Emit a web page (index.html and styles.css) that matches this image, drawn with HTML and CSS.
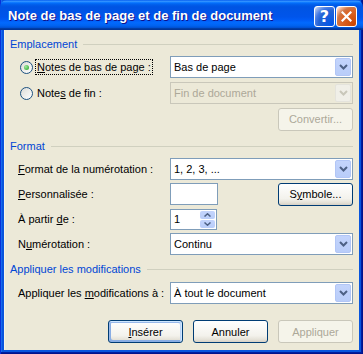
FILE: index.html
```html
<!DOCTYPE html>
<html lang="fr">
<head>
    <meta charset="UTF-8">
    <title>Note de bas de page et de fin de document</title>
    <link rel="stylesheet" href="styles.css">
</head>
<body>
    <div class="window">
        <div class="titlebar">
            <span class="title">Note de bas de page et de fin de document</span>
            <div class="caption-buttons">
                <span class="cap-btn help">?</span>
                <span class="cap-btn close">
                    <svg width="11" height="11" viewBox="0 0 11 11"><path d="M1.5 1.5 L9.5 9.5 M9.5 1.5 L1.5 9.5" stroke="#fff" stroke-width="2.2" stroke-linecap="square"/></svg>
                </span>
            </div>
        </div>
        <div class="client">
            <div class="group-title">Emplacement</div>
            <div class="rows rows-location">
                <div class="row">
                    <span class="radio-label">
                        <span class="radio checked"><span class="dot"></span></span>
                        <span class="focus"><u>N</u>otes de bas de page :</span>
                    </span>
                    <div class="combo"><span class="combo-text">Bas de page</span><span class="combo-arrow"><svg width="9" height="6" viewBox="0 0 9 6"><path d="M1 1 L4.5 4.5 L8 1" fill="none" stroke="#4D6185" stroke-width="2"/></svg></span></div>
                </div>
                <div class="row">
                    <span class="radio-label">
                        <span class="radio"></span>
                        <span class="plain">Note<u>s</u> de fin :</span>
                    </span>
                    <div class="combo disabled"><span class="combo-text">Fin de document</span><span class="combo-arrow"><svg width="9" height="6" viewBox="0 0 9 6"><path d="M1 1 L4.5 4.5 L8 1" fill="none" stroke="#C9C7BA" stroke-width="2"/></svg></span></div>
                </div>
                <div class="row row-end">
                    <span class="btn disabled">Convertir...</span>
                </div>
            </div>

            <div class="group-title">Format</div>
            <div class="rows rows-format">
                <div class="row">
                    <span class="label"><u>F</u>ormat de la numérotation :</span>
                    <div class="combo"><span class="combo-text">1, 2, 3, ...</span><span class="combo-arrow"><svg width="9" height="6" viewBox="0 0 9 6"><path d="M1 1 L4.5 4.5 L8 1" fill="none" stroke="#4D6185" stroke-width="2"/></svg></span></div>
                </div>
                <div class="row">
                    <span class="label"><u>P</u>ersonnalisée :</span>
                    <div class="textbox"></div>
                    <span class="btn symbol">S<u>y</u>mbole...</span>
                </div>
                <div class="row">
                    <span class="label">À partir <u>d</u>e :</span>
                    <div class="spin">
                        <span class="spin-text">1</span>
                        <span class="spin-buttons">
                            <span class="spin-btn"><svg width="7" height="4" viewBox="0 0 7 4"><path d="M0.5 3.5 L3.5 0.8 L6.5 3.5" fill="none" stroke="#4D6185" stroke-width="1.5"/></svg></span>
                            <span class="spin-btn"><svg width="7" height="4" viewBox="0 0 7 4"><path d="M0.5 0.5 L3.5 3.2 L6.5 0.5" fill="none" stroke="#4D6185" stroke-width="1.5"/></svg></span>
                        </span>
                    </div>
                </div>
                <div class="row">
                    <span class="label">N<u>u</u>mérotation :</span>
                    <div class="combo"><span class="combo-text">Continu</span><span class="combo-arrow"><svg width="9" height="6" viewBox="0 0 9 6"><path d="M1 1 L4.5 4.5 L8 1" fill="none" stroke="#4D6185" stroke-width="2"/></svg></span></div>
                </div>
            </div>

            <div class="group-title">Appliquer les modifications</div>
            <div class="rows rows-apply">
                <div class="row">
                    <span class="label">Appliquer les <u>m</u>odifications à :</span>
                    <div class="combo"><span class="combo-text">À tout le document</span><span class="combo-arrow"><svg width="9" height="6" viewBox="0 0 9 6"><path d="M1 1 L4.5 4.5 L8 1" fill="none" stroke="#4D6185" stroke-width="2"/></svg></span></div>
                </div>
            </div>

            <div class="footer">
                <span class="btn default"><u>I</u>nsérer</span>
                <span class="btn">Annuler</span>
                <span class="btn disabled">Appliquer</span>
            </div>
        </div>
    </div>
</body>
</html>
```

FILE: styles.css
```css
body {
    margin: 0;
    overflow: hidden;
    font-family: "Liberation Sans", Arial, sans-serif;
    font-size: 11px;
    color: #000;
}
.window {
    width: 363px;
    height: 354px;
    box-sizing: border-box;
    display: flex;
    flex-direction: column;
    background-color: #0855dd;
    padding: 0 4px 4px;
    box-shadow: inset 1px 0 #0831d9, inset -1px -1px #00138c, inset -2px -2px #001ea0, inset 2px 0 #166aee;
}
.titlebar {
    height: 30px;
    margin: 0 -4px;
    display: flex;
    align-items: center;
    justify-content: space-between;
    padding: 0 6px 0 8px;
    border-radius: 7px 7px 0 0;
    background: linear-gradient(to bottom, #0058ee 0%, #3593ff 4%, #288eff 6%, #127dff 8%, #036ffc 10%, #0262ee 14%, #0057e5 20%, #0054e3 24%, #0055eb 56%, #005bf5 66%, #026afe 76%, #0062ef 86%, #0052d6 92%, #0040ab 94%, #003092 100%);
}
.title {
    color: #fff;
    font-weight: bold;
    font-size: 13px;
    text-shadow: 1px 1px #0f1089;
}
.caption-buttons {
    display: flex;
    gap: 1px;
    margin-top: 3px;
}
.cap-btn {
    width: 21px;
    height: 21px;
    box-sizing: border-box;
    border: 1px solid #fff;
    border-radius: 3px;
    display: flex;
    align-items: center;
    justify-content: center;
    color: #fff;
}
.help {
    background: radial-gradient(circle at 90% 90%, #0054e9 0%, #2263d5 55%, #4479e4 70%, #a3bbec 90%, #fff 100%);
    font-family: "DejaVu Sans", sans-serif;
    font-weight: bold;
    font-size: 16px;
}
.close {
    background: radial-gradient(circle at 90% 90%, #cc4600 0%, #dc6527 55%, #cd7546 70%, #ffccb2 90%, #fff 100%);
}
.client {
    flex: 1;
    background-color: #ece9d8;
    padding: 7px 6px 0;
    box-shadow: inset 1px 0 #f5f3ea;
}
.group-title {
    height: 14px;
    display: flex;
    align-items: center;
    color: #0046d5;
}
.group-title::after {
    content: "";
    flex: 1;
    height: 0;
    border-top: 1px solid #d0d0bf;
    margin-left: 6px;
}
.rows {
    display: flex;
    flex-direction: column;
}
.rows-location {
    gap: 4px;
    margin-top: 5px;
    margin-bottom: 9px;
}
.rows-format {
    gap: 3px;
    margin-top: 5px;
    margin-bottom: 7px;
}
.rows-apply {
    margin-top: 6px;
}
.row {
    height: 22px;
    display: flex;
    align-items: center;
}
.row-end {
    justify-content: flex-end;
}
.label {
    width: 160px;
    box-sizing: border-box;
    padding-left: 8px;
}
.radio-label {
    width: 160px;
    box-sizing: border-box;
    padding-left: 10px;
    display: flex;
    align-items: center;
}
.radio {
    width: 13px;
    height: 13px;
    box-sizing: border-box;
    border: 1px solid #1c5180;
    border-radius: 50%;
    background: linear-gradient(135deg, #dcdcd7, #fff);
    display: flex;
    align-items: center;
    justify-content: center;
    margin-right: 3px;
}
.dot {
    width: 5px;
    height: 5px;
    border-radius: 50%;
    background: radial-gradient(circle at 35% 35%, #a0e8a0, #21a121);
}
.focus {
    outline: 1px dotted #000;
    padding: 1px;
}
.plain {
    padding: 1px;
}
.combo {
    width: 183px;
    height: 22px;
    box-sizing: border-box;
    border: 1px solid #7f9db9;
    background-color: #fff;
    display: flex;
    align-items: center;
    padding: 1px;
}
.combo-text {
    flex: 1;
    padding-left: 2px;
}
.combo-arrow {
    width: 16px;
    height: 18px;
    box-sizing: border-box;
    border: 1px solid #b2c6f6;
    border-radius: 2px;
    background: linear-gradient(to bottom, #c3d4fc, #b9cdf9);
    display: flex;
    align-items: center;
    justify-content: center;
}
.combo.disabled {
    border-color: #c9c7ba;
    background-color: #ece9d8;
    color: #aca899;
}
.combo.disabled .combo-arrow {
    background: #f0efe8;
    border-color: #e4e3dc;
}
.textbox {
    width: 48px;
    height: 22px;
    box-sizing: border-box;
    border: 1px solid #7f9db9;
    background-color: #fff;
}
.spin {
    width: 47px;
    height: 21px;
    box-sizing: border-box;
    border: 1px solid #7f9db9;
    background-color: #fff;
    display: flex;
    align-items: center;
    padding: 1px;
}
.spin-text {
    flex: 1;
    padding-left: 2px;
}
.spin-buttons {
    width: 15px;
    height: 17px;
    display: flex;
    flex-direction: column;
    gap: 1px;
}
.spin-btn {
    flex: 1;
    border-radius: 2px;
    background: linear-gradient(to bottom, #c3d4fc, #b9cdf9);
    display: flex;
    align-items: center;
    justify-content: center;
}
.btn {
    width: 75px;
    height: 23px;
    box-sizing: border-box;
    border: 1px solid #003c74;
    border-radius: 3px;
    background: linear-gradient(to bottom, #fff, #f3f2ec 70%, #e5e2d8 88%, #d6d0c5);
    display: flex;
    align-items: center;
    justify-content: center;
}
.btn.symbol {
    margin-left: auto;
}
.btn.default {
    box-shadow: inset -1px 1px #cee7ff, inset 1px 2px #98b8ea, inset -2px 2px #bcd4f6, inset 1px -1px #89ade4, inset 2px -2px #89ade4;
}
.btn.disabled {
    border-color: #c9c7ba;
    background: #f5f4ea;
    color: #aca899;
}
.footer {
    display: flex;
    justify-content: flex-end;
    gap: 10px;
    margin-top: 16px;
}
```
